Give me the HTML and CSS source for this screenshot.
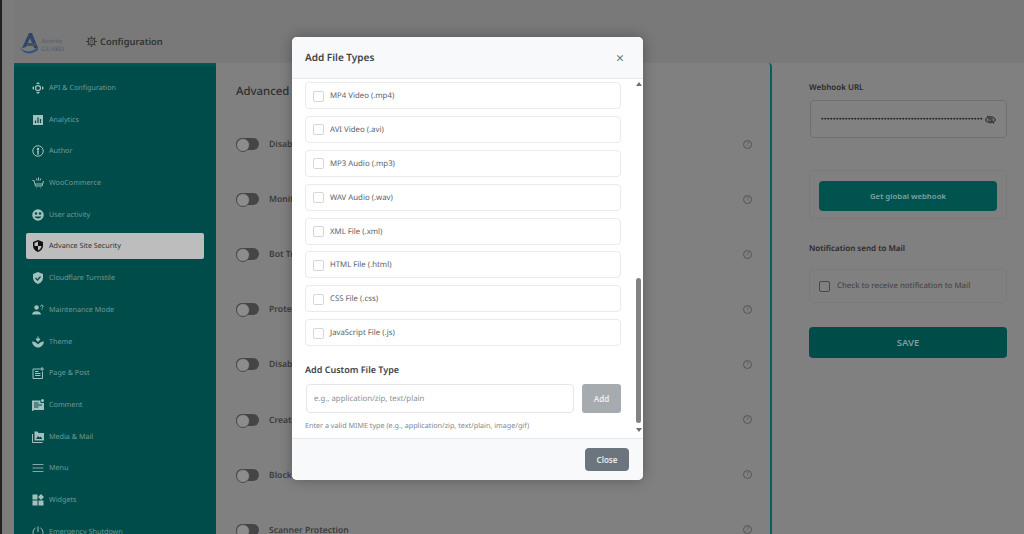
FILE: index.html
```html
<!DOCTYPE html>
<html lang="en">
<head>
    <meta charset="UTF-8">
    <title>Activity Guard - Configuration</title>
    <link rel="stylesheet" href="styles.css">
</head>
<body>
    <div class="app">
        <header class="topbar">
            <div class="logo">
                <svg width="19" height="21" viewBox="0 0 19 21">
                    <path d="M2 15 L9 0 L12 0 L18 15 L14 15 L10 5 L6 14 Z" fill="#2e4767"/>
                    <path d="M0 14 C3 19 12 21 18 13 L18 17 C12 22 3 22 0 14 Z" fill="#31577f"/>
                    <path d="M7 10 H16 V13 H7 Z" fill="#4a4f58"/>
                </svg>
                <div class="logo-text"><span>Activity</span><span>GUARD</span></div>
            </div>
            <div class="page-title">
                <svg width="11" height="11" viewBox="0 0 24 24" fill="none" stroke="#3c3c3c" stroke-width="2.4">
                    <circle cx="12" cy="12" r="7"/>
                    <circle cx="12" cy="12" r="3" stroke-width="1.5"/>
                    <path d="M12 0v5M12 19v5M0 12h5M19 12h5M3.5 3.5l3.5 3.5M17 17l3.5 3.5M3.5 20.5l3.5-3.5M17 7l3.5-3.5"/>
                </svg>
                <span>Configuration</span>
            </div>
        </header>

        <div class="layout">
            <nav class="sidebar">
                <a class="nav-item"><svg viewBox="0 0 24 24" class="nav-icon"><circle cx="12" cy="12" r="5" fill="none" stroke="currentColor" stroke-width="2.5"/><path d="M12 0l4 4H8zM12 24l4-4H8zM0 12l4-4v8zM24 12l-4-4v8z" fill="currentColor"/></svg>API &amp; Configuration</a>
                <a class="nav-item"><svg viewBox="0 0 24 24" class="nav-icon"><path d="M2 2h20v20H2z" fill="currentColor"/><path d="M7 18v-5M12 18V7M17 18v-8" stroke="#004c4a" stroke-width="2.5"/></svg>Analytics</a>
                <a class="nav-item"><svg viewBox="0 0 24 24" class="nav-icon"><circle cx="12" cy="12" r="10.5" fill="none" stroke="currentColor" stroke-width="2"/><circle cx="12" cy="8" r="2.5" fill="currentColor"/><path d="M10 11h4l-1 9h-2z" fill="currentColor"/></svg>Author</a>
                <a class="nav-item"><svg viewBox="0 0 24 24" class="nav-icon"><path d="M1 7h3l3 11h13l3-10M7 14h14M8 22h1M17 22h1M13 1v6M9 3l1 4M18 3l-2 4" fill="none" stroke="currentColor" stroke-width="2"/></svg>WooCommerce</a>
                <a class="nav-item"><svg viewBox="0 0 24 24" class="nav-icon"><circle cx="12" cy="12" r="11.5" fill="currentColor"/><circle cx="8" cy="9" r="2.5" fill="#004c4a"/><circle cx="16" cy="9" r="2.5" fill="#004c4a"/><path d="M5 15c2 5 12 5 14 0z" fill="#004c4a"/></svg>User activity</a>
                <a class="nav-item active"><svg viewBox="0 0 24 24" class="nav-icon"><path d="M12 0l10 4v7c0 6-4 11-10 13C6 22 2 17 2 11V4z" fill="currentColor"/><path d="M12 3v9h7c-.5 4-3 7-7 9z M12 12H5V6l7-3z" fill="#bdbdbd"/></svg>Advance Site Security</a>
                <a class="nav-item"><svg viewBox="0 0 24 24" class="nav-icon"><path d="M12 0l10 4v7c0 6-4 11-10 13C6 22 2 17 2 11V4z" fill="currentColor"/><path d="M7 12l4 4 6-7" fill="none" stroke="#004c4a" stroke-width="2.5"/></svg>Cloudflare Turnstile</a>
                <a class="nav-item"><svg viewBox="0 0 24 24" class="nav-icon"><circle cx="9" cy="7" r="4.5" fill="currentColor"/><path d="M0 21c0-9 18-9 18 0z" fill="currentColor"/><path d="M17 5c1-4 6-3 5 0-.5 2-2 2-2 4M20 11v1" fill="none" stroke="currentColor" stroke-width="2"/></svg>Maintenance Mode</a>
                <a class="nav-item"><svg viewBox="0 0 24 24" class="nav-icon"><path d="M12 1v8M8 6l4 5 4-5z" fill="currentColor" stroke="currentColor" stroke-width="2"/><path d="M0 11c6 0 10 3 12 6 2-3 6-6 12-6-1 7-6 12-12 12S1 18 0 11z" fill="currentColor"/></svg>Theme</a>
                <a class="nav-item"><svg viewBox="0 0 24 24" class="nav-icon"><path d="M16 4H2v19h19V9" fill="none" stroke="currentColor" stroke-width="2"/><path d="M6 9h7M6 13h11M6 17h11M20 0v8M16 4h8" stroke="currentColor" stroke-width="2"/></svg>Page &amp; Post</a>
                <a class="nav-item"><svg viewBox="0 0 24 24" class="nav-icon"><path d="M0 3h17v5h7v14H4l-4 3z" fill="currentColor"/><circle cx="21" cy="3" r="3" fill="currentColor"/><path d="M4 8h9M4 12h16M4 16h9" stroke="#004c4a" stroke-width="2"/></svg>Comment</a>
                <a class="nav-item"><svg viewBox="0 0 24 24" class="nav-icon"><path d="M5 1h6l2 3h11v15H5z" fill="currentColor"/><path d="M1 6v17h20" fill="none" stroke="currentColor" stroke-width="2"/><path d="M8 16l4-6 3 3 2-2 4 5z" fill="#004c4a"/></svg>Media &amp; Mail</a>
                <a class="nav-item"><svg viewBox="0 0 24 24" class="nav-icon"><path d="M1 5h22M1 12h22M1 19h22" stroke="currentColor" stroke-width="1.6"/></svg>Menu</a>
                <a class="nav-item"><svg viewBox="0 0 24 24" class="nav-icon"><path d="M1 1h10v10H1zM1 13h10v10H1zM13 13h10v10H13zM18 0l6 6-6 6-6-6z" fill="currentColor"/></svg>Widgets</a>
                <a class="nav-item"><svg viewBox="0 0 24 24" class="nav-icon"><path d="M12 1v11M7 4a10 10 0 1 0 10 0" fill="none" stroke="currentColor" stroke-width="2"/></svg>Emergency Shutdown</a>
            </nav>

            <main class="main">
                <h2 class="main-title">Advanced Site Security</h2>
                <div class="option"><span class="toggle"></span><span>Disable File Editing</span><span class="help">?</span></div>
                <div class="option"><span class="toggle"></span><span>Monitor File Changes</span><span class="help">?</span></div>
                <div class="option"><span class="toggle"></span><span>Bot Traffic Blocking</span><span class="help">?</span></div>
                <div class="option"><span class="toggle"></span><span>Protect Login Page</span><span class="help">?</span></div>
                <div class="option"><span class="toggle"></span><span>Disable XML-RPC</span><span class="help">?</span></div>
                <div class="option"><span class="toggle"></span><span>Create Security Log</span><span class="help">?</span></div>
                <div class="option"><span class="toggle"></span><span>Block File Uploads</span><span class="help">?</span></div>
                <div class="option"><span class="toggle"></span><span>Scanner Protection</span><span class="help">?</span></div>
            </main>

            <aside class="panel">
                <label class="panel-label">Webhook URL</label>
                <div class="webhook-input">
                    <span class="dots">••••••••••••••••••••••••••••••••••••••••••••••••••••••</span>
                    <svg width="11" height="9" viewBox="0 0 24 20" fill="none" stroke="#3c3c3c" stroke-width="2.5"><path d="M1 11C5 1 18 1 23 11c-5 8-18 8-22 0z"/><circle cx="12" cy="11" r="4"/><path d="M5 2l15 17"/></svg>
                </div>
                <div class="webhook-box">
                    <button class="btn-teal">Get global webhook</button>
                </div>
                <label class="panel-label mail-label">Notification send to Mail</label>
                <div class="mail-box">
                    <span class="check dark"></span>
                    <span>Check to receive notification to Mail</span>
                </div>
                <button class="btn-save">SAVE</button>
            </aside>
        </div>
    </div>

    <div class="modal">
        <div class="modal-header">
            <h3>Add File Types</h3>
            <span class="modal-x">×</span>
        </div>
        <div class="modal-body">
            <div class="modal-scroll">
                <div class="file-row"><span class="check"></span>MP4 Video (.mp4)</div>
                <div class="file-row"><span class="check"></span>AVI Video (.avi)</div>
                <div class="file-row"><span class="check"></span>MP3 Audio (.mp3)</div>
                <div class="file-row"><span class="check"></span>WAV Audio (.wav)</div>
                <div class="file-row"><span class="check"></span>XML File (.xml)</div>
                <div class="file-row"><span class="check"></span>HTML File (.html)</div>
                <div class="file-row"><span class="check"></span>CSS File (.css)</div>
                <div class="file-row"><span class="check"></span>JavaScript File (.js)</div>
                <h4>Add Custom File Type</h4>
                <div class="custom-row">
                    <div class="custom-input">e.g., application/zip, text/plain</div>
                    <button class="btn-add">Add</button>
                </div>
                <p class="hint">Enter a valid MIME type (e.g., application/zip, text/plain, image/gif)</p>
            </div>
            <div class="scrollbar">
                <span class="arrow-up"></span>
                <span class="thumb"></span>
                <span class="arrow-down"></span>
            </div>
        </div>
        <div class="modal-footer">
            <button class="btn-close">Close</button>
        </div>
    </div>
</body>
</html>
```

FILE: styles.css
```css
* {
    box-sizing: border-box;
}
html, body {
    margin: 0;
    height: 534px;
    overflow: hidden;
}
body {
    font-family: "Noto Sans", "Open Sans", sans-serif;
    background-color: #808080;
    color: #444;
    text-rendering: geometricPrecision;
}
button {
    font-family: inherit;
    border: none;
}
.app {
    height: 534px;
    padding-left: 12px;
    border-left: 2px solid #222;
    display: flex;
    flex-direction: column;
    background-color: #7c7c7c;
}
.topbar {
    height: 63px;
    flex-shrink: 0;
    display: flex;
    align-items: flex-end;
    padding: 0 0 9px 6px;
    background-color: #797979;
}
.logo {
    display: flex;
    align-items: flex-end;
    gap: 2px;
    width: 66px;
}
.logo-text {
    display: flex;
    flex-direction: column;
    font-family: "Liberation Serif", serif;
    font-size: 6.5px;
    line-height: 8px;
    color: #4f5a66;
}
.page-title {
    display: flex;
    align-items: center;
    gap: 3px;
    margin-bottom: 6px;
    font-size: 9.3px;
    font-weight: 600;
    color: #333;
}
.layout {
    flex: 1;
    display: flex;
    min-height: 0;
}
.sidebar {
    width: 202px;
    flex-shrink: 0;
    padding: 11.5px 12px 0;
    display: flex;
    flex-direction: column;
    gap: 5.7px;
    background: linear-gradient(#005c58, #004c4a 5px);
    overflow: hidden;
}
.nav-item {
    height: 26px;
    flex-shrink: 0;
    display: flex;
    align-items: center;
    gap: 5px;
    padding: 1px 0 0 6px;
    font-size: 7.2px;
    color: #6f9a98;
    border-radius: 2px;
}
.nav-item.active {
    background-color: #bdbdbd;
    color: #333;
}
.nav-item.active .nav-icon {
    color: #111;
}
.nav-icon {
    width: 12px;
    height: 12px;
    flex-shrink: 0;
    color: #a3bfbe;
}
.main {
    width: 556px;
    flex-shrink: 0;
    padding: 21px 18px 0 20px;
    background-color: #808080;
    border-right: 2px solid #00625e;
    border-top-right-radius: 4px;
    overflow: hidden;
}
.main-title {
    margin: 0 0 16.5px;
    font-size: 11.4px;
    line-height: 16px;
    font-weight: 500;
    color: #2e2e2e;
}
.option {
    height: 55.1px;
    display: flex;
    align-items: center;
    gap: 10px;
    font-size: 8.6px;
    font-weight: 600;
    color: #3c3c3c;
}
.toggle {
    width: 23px;
    height: 12px;
    border-radius: 6px;
    background-color: #454545;
    position: relative;
}
.toggle::before {
    content: "";
    position: absolute;
    left: 0;
    top: 0;
    width: 12px;
    height: 12px;
    border: 1px solid #4a4a4a;
    border-radius: 50%;
    background-color: #8c8c8c;
}
.help {
    margin-left: auto;
    width: 9px;
    height: 9px;
    border: 1px solid #555;
    border-radius: 50%;
    font-size: 6px;
    line-height: 7px;
    text-align: center;
    font-weight: 400;
    color: #555;
}
.panel {
    flex: 1;
    padding: 19px 18px 0 37px;
    background-color: #808080;
}
.panel-label {
    display: block;
    font-size: 8px;
    line-height: 12px;
    font-weight: 600;
    color: #2a2a2a;
}
.webhook-input {
    height: 38px;
    margin: 6px 0 32px 1px;
    padding: 0 10px;
    display: flex;
    align-items: center;
    gap: 1px;
    border: 1px solid #707070;
    border-radius: 4px;
    background-color: #818181;
}
.dots {
    width: 163px;
    flex-shrink: 0;
    overflow: hidden;
    white-space: nowrap;
    font-family: "Liberation Sans", sans-serif;
    font-size: 7px;
    letter-spacing: 0.55px;
    color: #1c1c1c;
}
.webhook-box {
    height: 49px;
    padding: 9.5px 9px;
    border: 1px solid #7a7a7a;
    border-radius: 4px;
}
.btn-teal {
    width: 100%;
    height: 30px;
    border-radius: 4px;
    background-color: #00534f;
    color: #7fa5a3;
    font-size: 7.8px;
    font-weight: 600;
}
.mail-label {
    margin-top: 24px;
}
.mail-box {
    height: 34px;
    margin: 14px 0 24px;
    padding: 0 9px;
    display: flex;
    align-items: center;
    gap: 7px;
    border: 1px solid #7a7a7a;
    border-radius: 4px;
    font-size: 7.8px;
    color: #484848;
    font-weight: 500;
}
.btn-save {
    width: 100%;
    height: 31px;
    border-radius: 4px;
    background-color: #004c49;
    color: #7fa09e;
    font-size: 9.5px;
    font-weight: 600;
}
.check {
    width: 11px;
    height: 11px;
    flex-shrink: 0;
    border: 1px solid #d4d6d8;
    border-radius: 2px;
    background-color: #fff;
}
.check.dark {
    border-color: #484848;
    background-color: transparent;
}

/* dialog */
.modal {
    position: absolute;
    left: 292px;
    top: 37px;
    width: 351px;
    height: 443px;
    display: flex;
    flex-direction: column;
    background-color: #fff;
    border-radius: 5px;
    box-shadow: 0 0 14px rgba(0, 0, 0, 0.3);
    overflow: hidden;
}
.modal-header {
    height: 42px;
    flex-shrink: 0;
    display: flex;
    justify-content: space-between;
    padding: 13px 19px 0 13px;
    background-color: #f8f9fa;
    border-bottom: 1px solid #e6e8ea;
}
.modal-header h3 {
    margin: 0;
    font-size: 10px;
    line-height: 14px;
    font-weight: 600;
    color: #3c4248;
}
.modal-x {
    margin-top: 1px;
    font-size: 14px;
    line-height: 16px;
    color: #777;
}
.modal-body {
    flex: 1;
    display: flex;
    min-height: 0;
}
.modal-scroll {
    flex: 1;
    padding: 3px 15px 0 13px;
    overflow: hidden;
}
.file-row {
    height: 27px;
    margin-bottom: 6.9px;
    padding: 1px 0 0 7px;
    display: flex;
    align-items: center;
    gap: 6px;
    border: 1px solid #e8eaec;
    border-radius: 4px;
    font-size: 7.8px;
    color: #5c6268;
}
.modal-scroll h4 {
    margin: 16.6px 0 8.5px;
    font-size: 9px;
    line-height: 13px;
    font-weight: 600;
    color: #3c4248;
}
.custom-row {
    display: flex;
    gap: 8px;
    padding-left: 1px;
}
.custom-input {
    flex: 1;
    height: 29px;
    padding: 1px 0 0 7px;
    display: flex;
    align-items: center;
    border: 1px solid #e4e6e8;
    border-radius: 4px;
    font-size: 7.8px;
    color: #8b9096;
}
.btn-add {
    width: 39px;
    height: 29px;
    border-radius: 3px;
    background-color: #a6abb0;
    color: #eef0f1;
    font-size: 8px;
    font-weight: 600;
}
.hint {
    margin: 7.5px 0 0;
    font-size: 7.2px;
    line-height: 10px;
    color: #82888e;
}
.scrollbar {
    width: 7px;
    padding: 3px 2px 3px 0;
    display: flex;
    flex-direction: column;
    align-items: center;
    background-color: #fff;
}
.arrow-up {
    border: 3px solid transparent;
    border-top: 0;
    border-bottom: 4px solid #707070;
}
.arrow-down {
    margin-top: 5px;
    border: 3px solid transparent;
    border-bottom: 0;
    border-top: 4px solid #707070;
}
.thumb {
    width: 5px;
    height: 145px;
    margin-top: 192px;
    border-radius: 3px;
    background-color: #828282;
}
.modal-footer {
    height: 42px;
    flex-shrink: 0;
    display: flex;
    justify-content: flex-end;
    align-items: center;
    padding-right: 14px;
    background-color: #f8f9fa;
    border-top: 1px solid #e6e8ea;
}
.btn-close {
    width: 44px;
    height: 23px;
    border-radius: 4px;
    background-color: #6c757d;
    color: #e8eaec;
    font-size: 8px;
    font-weight: 600;
}
```
